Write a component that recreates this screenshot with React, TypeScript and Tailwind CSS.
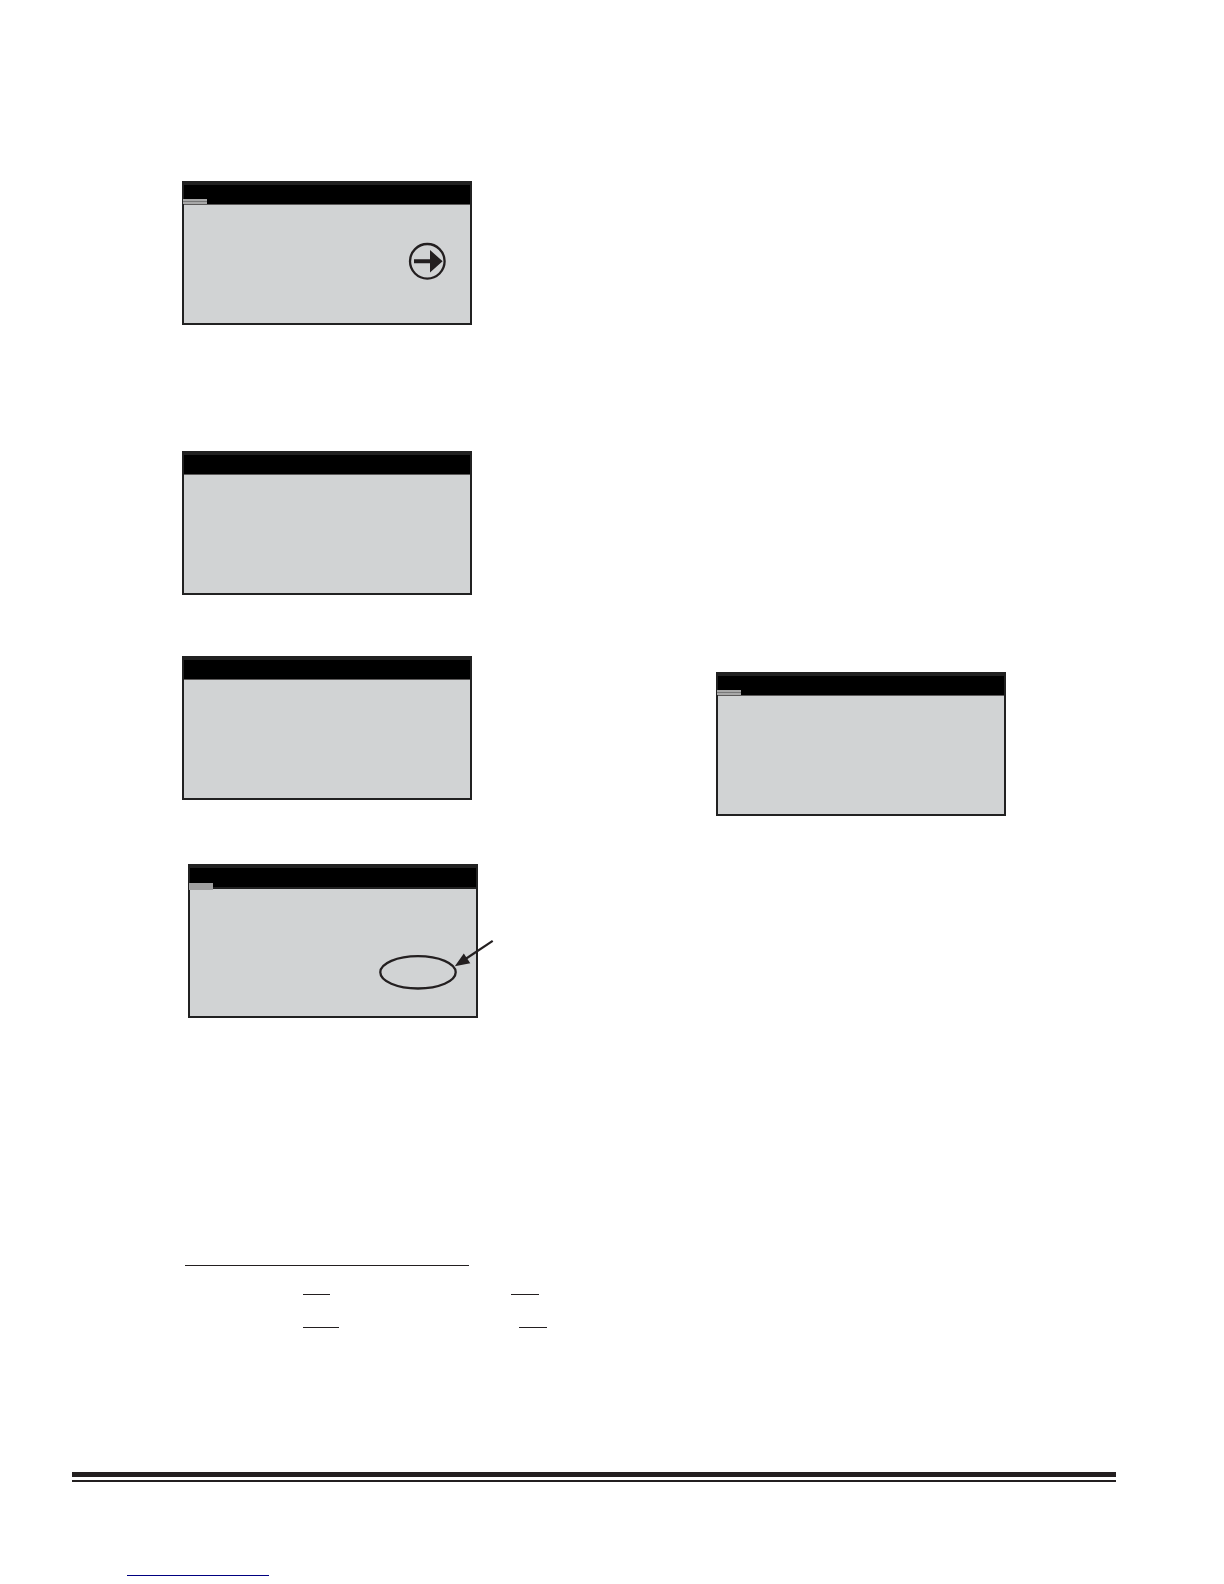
import type { ReactNode } from 'react'
import clsx from 'clsx'

interface DisplayPanelProps {
  tall?: boolean
  marker?: boolean
  className?: string
  children?: ReactNode
}

// Gray LCD-style display with a black title bar
function DisplayPanel({ tall = false, marker = false, className = '', children }: DisplayPanelProps) {
  return (
    <div
      className={clsx(
        'relative w-[290px] border-2 border-[#212121] bg-[#d1d3d4]',
        tall ? 'h-[154px]' : 'h-36',
        className
      )}
    >
      <div
        className={clsx(
          'bg-black',
          tall
            ? 'h-[23px] border-y-2 border-[#212121]'
            : 'h-[22px] border-b border-t-2 border-b-[#5c5a5a] border-t-[#212121]'
        )}
      />
      {marker && (
        <div
          className={clsx(
            'absolute -left-px w-6',
            tall ? 'top-[17px] h-[7px] bg-[#a0a0a0]' : 'top-4 h-[5px] border-y-2 border-[#a8a8a8] bg-[#777777]'
          )}
        />
      )}
      {children}
    </div>
  )
}

function ArrowButtonIcon() {
  return (
    <svg className="h-[38px] w-[38px]" viewBox="0 0 38 38" fill="none" aria-hidden="true">
      <circle cx="19.3" cy="19.3" r="17.3" stroke="#231f20" strokeWidth="2.3" />
      <path d="M6 17.2H22V8L34.6 19.2L22 30.5V21.2H6Z" fill="#231f20" />
    </svg>
  )
}

// Ellipse with a pointer that reaches out past the display edge
function Callout() {
  return (
    <svg
      className="absolute left-[188px] top-[72px] h-[54px] w-[118px]"
      viewBox="0 0 118 54"
      fill="none"
      aria-hidden="true"
    >
      <ellipse cx="40" cy="34.3" rx="37.7" ry="16.2" stroke="#231f20" strokeWidth="2.3" />
      <path d="M114.7 2.8L86 22" stroke="#231f20" strokeWidth="2.2" />
      <path d="M76.8 28.2L85.8 15.6L92.3 25.3Z" fill="#231f20" />
    </svg>
  )
}

export default function App() {
  return (
    <div className="bg-white pb-2 pl-[72px] pr-[108px] pt-[181px]">
      <main className="grid grid-cols-2 gap-x-6">
        {/* Left column */}
        <section className="pl-[110px]">
          <DisplayPanel marker>
            <div className="flex justify-end pr-6 pt-[37px]">
              <ArrowButtonIcon />
            </div>
          </DisplayPanel>
          <DisplayPanel className="mt-[126px]" />
          <DisplayPanel className="mt-[61px]" />
          <DisplayPanel tall marker className="ml-1.5 mt-16">
            <Callout />
          </DisplayPanel>

          {/* Underlines */}
          <div className="mt-[247px] pl-[3px]">
            <div className="h-px w-[284px] bg-[#231f20]" />
            <div className="mt-7 flex pl-[118px]">
              <div className="h-px w-[27px] bg-[#231f20]" />
              <div className="ml-[181px] h-px w-7 bg-[#231f20]" />
            </div>
            <div className="mt-8 flex pl-[118px]">
              <div className="h-px w-9 bg-[#231f20]" />
              <div className="ml-[180px] h-px w-7 bg-[#231f20]" />
            </div>
          </div>
        </section>

        {/* Right column */}
        <section className="pl-[110px] pt-[491px]">
          <DisplayPanel marker />
        </section>
      </main>

      {/* Footer */}
      <footer className="mt-36">
        <div className="h-2.5 border-b-2 border-t-[5px] border-[#231f20]" />
        <div className="ml-[55px] mt-[93px] h-px w-[142px] bg-[#000080]" />
      </footer>
    </div>
  )
}
